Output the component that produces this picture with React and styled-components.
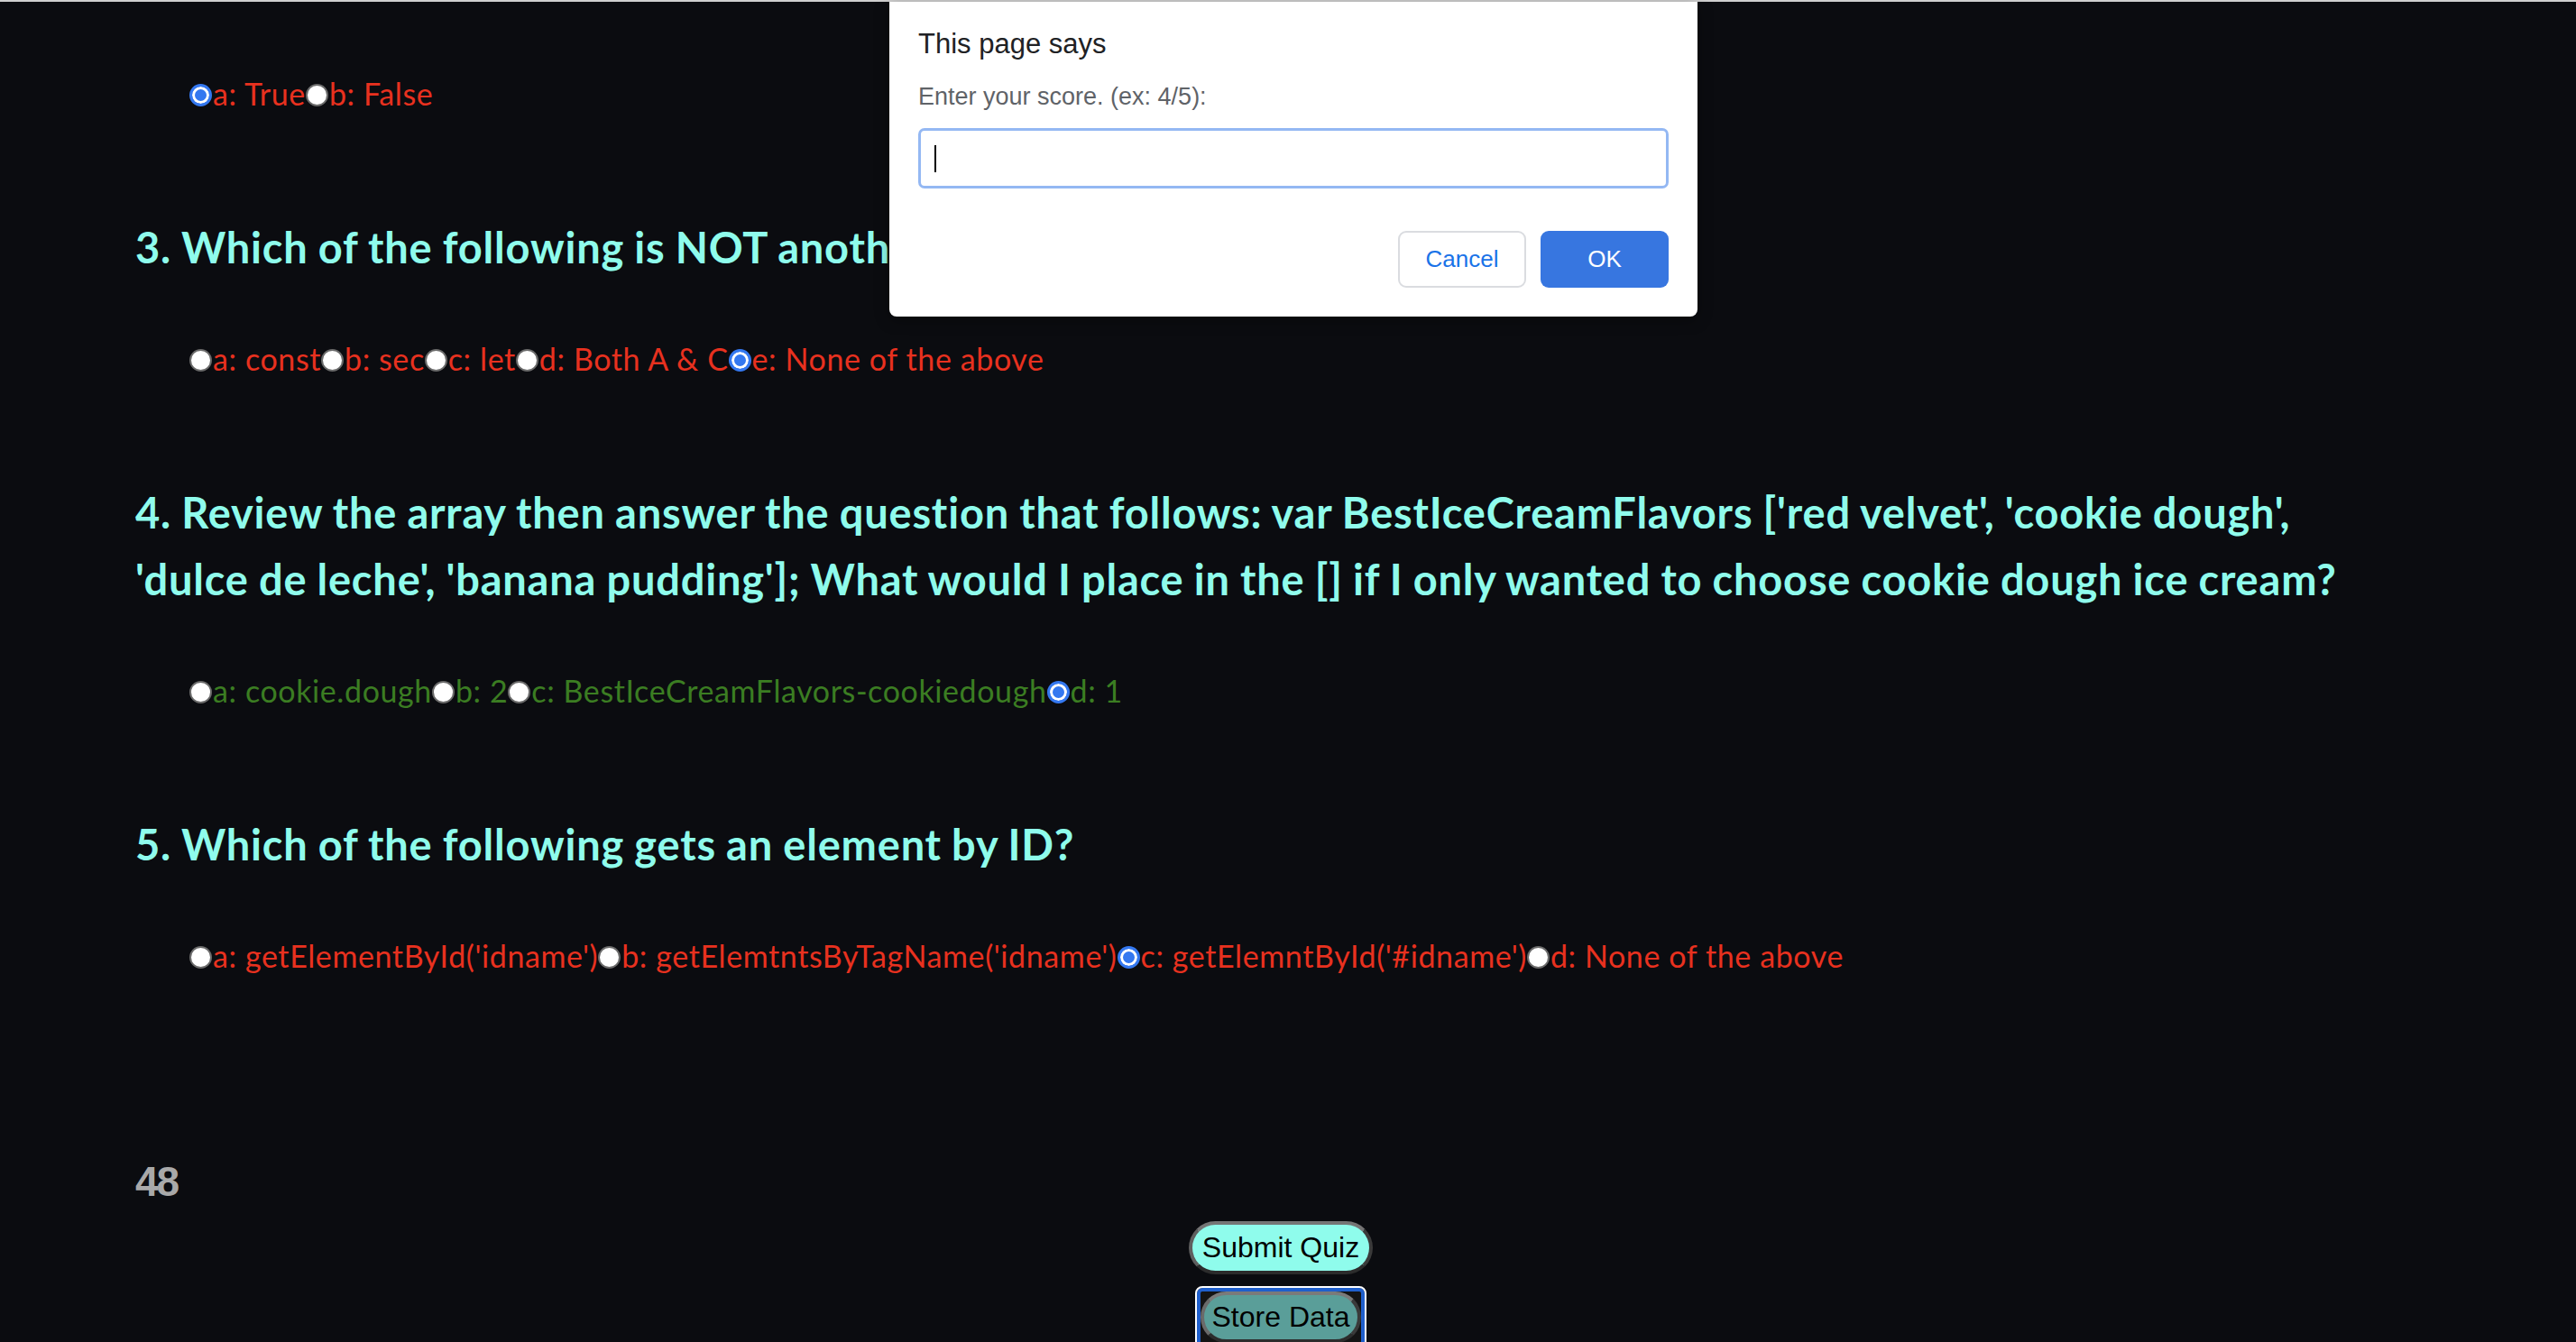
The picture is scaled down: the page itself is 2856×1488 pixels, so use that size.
import styled, { createGlobalStyle } from "styled-components"

const questions = [
    {
        id: "q2",
        options: [
            { label: "a: True", checked: true },
            { label: "b: False" },
        ],
    },
    {
        id: "q3",
        title: "3. Which of the following is NOT another way to declare a variable?",
        options: [
            { label: "a: const" },
            { label: "b: sec" },
            { label: "c: let" },
            { label: "d: Both A & C" },
            { label: "e: None of the above", checked: true },
        ],
    },
    {
        id: "q4",
        title: "4. Review the array then answer the question that follows: var BestIceCreamFlavors ['red velvet', 'cookie dough', 'dulce de leche', 'banana pudding']; What would I place in the [] if I only wanted to choose cookie dough ice cream?",
        correct: true,
        options: [
            { label: "a: cookie.dough" },
            { label: "b: 2" },
            { label: "c: BestIceCreamFlavors-cookiedough" },
            { label: "d: 1", checked: true },
        ],
    },
    {
        id: "q5",
        title: "5. Which of the following gets an element by ID?",
        options: [
            { label: "a: getElementById('idname')" },
            { label: "b: getElemtntsByTagName('idname')" },
            { label: "c: getElemntById('#idname')", checked: true },
            { label: "d: None of the above" },
        ],
    },
]

export default function App() {
    return (
        <>
            <GlobalStyle />
            <Page>
                <Quiz>
                    {questions.map((q) => (
                        <Question key={q.id}>
                            {q.title && <Heading>{q.title}</Heading>}
                            <Options $correct={q.correct}>
                                {q.options.map((opt) => (
                                    <Choice key={opt.label}>
                                        <Radio type="radio" name={q.id} defaultChecked={!!opt.checked} />
                                        {opt.label}
                                    </Choice>
                                ))}
                            </Options>
                        </Question>
                    ))}
                </Quiz>
                <Score>48</Score>
                <Actions>
                    <SubmitButton>Submit Quiz</SubmitButton>
                    <FocusFrame>
                        <StoreButton>Store Data</StoreButton>
                    </FocusFrame>
                </Actions>

                <Dialog>
                    <DialogTitle>This page says</DialogTitle>
                    <DialogMessage>Enter your score. (ex: 4/5):</DialogMessage>
                    <PromptField>
                        <Caret />
                    </PromptField>
                    <DialogButtons>
                        <CancelButton>Cancel</CancelButton>
                        <OkButton>OK</OkButton>
                    </DialogButtons>
                </Dialog>
            </Page>
        </>
    )
}

const GlobalStyle = createGlobalStyle`
    html, body {
        margin: 0;
        padding: 0;
        background-color: #0b0c10;
    }
    body {
        font-family: "Lato", "Open Sans", sans-serif;
        height: 1488px;
        overflow: hidden;
    }
`

const Page = styled.div`
    position: relative;
    min-height: 1488px;
    box-sizing: border-box;
    border-top: 2px solid #cfcfcf;
    background-color: #0b0c10;
    padding: 82px 0 0 150px;
`

const Quiz = styled.div`
    display: flex;
    flex-direction: column;
    gap: 114px;
    max-width: 2520px;
`

const Question = styled.section`
    display: flex;
    flex-direction: column;
`

const Heading = styled.h2`
    margin: -1px 0 67px;
    font-family: "Lato", sans-serif;
    font-weight: 700;
    font-size: 47px;
    line-height: 74px;
    color: #8ffcec;
    letter-spacing: 0.8px;
    word-spacing: -1px;
`

const Options = styled.div`
    padding-left: 60px;
    font-family: "Lato", sans-serif;
    font-size: 34px;
    line-height: 40px;
    letter-spacing: 0.6px;
    color: ${(p) => (p.$correct ? "#3b7d22" : "#e8311f")};
    white-space: nowrap;
`

const Choice = styled.label`
    display: inline;
`

const Radio = styled.input`
    appearance: none;
    box-sizing: border-box;
    width: 25px;
    height: 25px;
    margin: 0 1px 0 0;
    border: 2px solid #6b6b6b;
    border-radius: 50%;
    background-color: #ffffff;
    vertical-align: -1px;

    &:checked {
        border: 3px solid #3478f0;
        background-color: #3478f0;
        box-shadow: inset 0 0 0 3px #ffffff;
    }
`

const Score = styled.h3`
    margin: 205px 0 0;
    font-family: "Liberation Sans", sans-serif;
    font-weight: 700;
    font-size: 46px;
    line-height: 50px;
    color: #a9a9a9;
    letter-spacing: -2px;
`

const Actions = styled.div`
    display: flex;
    flex-direction: column;
    align-items: center;
    gap: 13px;
    margin: 19px 0 0 -150px;
    padding-right: 16px;
`

const PillButton = styled.button`
    font-family: "Liberation Sans", Arial, sans-serif;
    font-size: 32px;
    line-height: 37px;
    color: #000000;
    border-radius: 30px;
    border: 4px solid;
    cursor: pointer;
`

const SubmitButton = styled(PillButton)`
    padding: 7px 11px;
    background-color: #8ffcec;
    border-color: #757575 #3a3a3a #2c2c2c #5f5f5f;
`

const FocusFrame = styled.div`
    border: 4px solid #1f5fcc;
    outline: 2px solid #ffffff;
    border-radius: 6px;
    background-color: #141414;
    padding: 0;
    margin-top: 2px;
`

const StoreButton = styled(PillButton)`
    display: block;
    padding: 6px 9px;
    background-color: #5a9e99;
    border-color: #7a7a7a #3a3a3a #2c2c2c #6a6a6a;
`

const Dialog = styled.div`
    position: absolute;
    top: 0;
    left: 986px;
    width: 896px;
    height: 349px;
    box-sizing: border-box;
    padding: 29px 32px 32px 32px;
    background-color: #ffffff;
    border-radius: 0 0 8px 8px;
    box-shadow: 0 4px 16px rgba(0, 0, 0, 0.35);
    display: flex;
    flex-direction: column;
    font-family: "Liberation Sans", Arial, sans-serif;
`

const DialogTitle = styled.div`
    font-size: 31px;
    line-height: 36px;
    color: #202124;
`

const DialogMessage = styled.div`
    margin-top: 25px;
    font-size: 27px;
    line-height: 31px;
    color: #5f6368;
`

const PromptField = styled.div`
    margin-top: 19px;
    height: 67px;
    box-sizing: border-box;
    border: 3px solid #94b8f3;
    border-radius: 7px;
    display: flex;
    align-items: center;
    padding-left: 15px;
`

const Caret = styled.span`
    width: 2px;
    height: 30px;
    background-color: #000000;
`

const DialogButtons = styled.div`
    margin-top: 47px;
    display: flex;
    justify-content: flex-end;
    gap: 16px;
`

const DialogButton = styled.button`
    width: 142px;
    height: 63px;
    border-radius: 9px;
    font-family: "Liberation Sans", Arial, sans-serif;
    font-size: 26px;
    cursor: pointer;
`

const CancelButton = styled(DialogButton)`
    background-color: #ffffff;
    border: 2px solid #dadce0;
    color: #1a73e8;
`

const OkButton = styled(DialogButton)`
    background-color: #3776e0;
    border: none;
    color: #ffffff;
`
